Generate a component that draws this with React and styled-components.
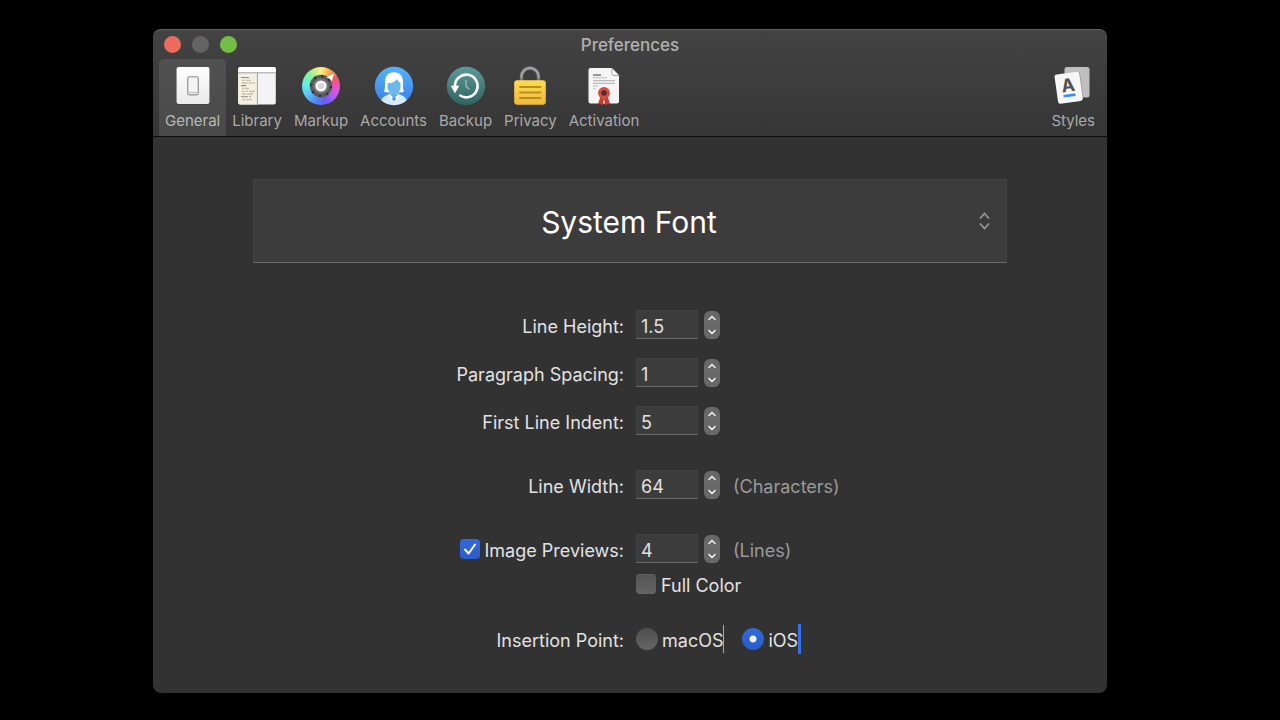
import React, { useState } from "react";
import styled, { createGlobalStyle } from "styled-components";

const GlobalStyle = createGlobalStyle`
  *, *::before, *::after { box-sizing: border-box; }
  body {
    margin: 0;
    background: #000;
    color: #e2e2e2;
    font-family: Inter, "Liberation Sans", sans-serif;
    font-size: 18px;
  }
  button, input, select { font: inherit; color: inherit; margin: 0; }
`;

const Desktop = styled.div`
  padding: 29px 173px 27px 153px;
`;

const Window = styled.main`
  border-radius: 8px;
  overflow: hidden;
  background: #323232;
`;

const Header = styled.header`
  background: linear-gradient(#434343, #363636);
  border-bottom: 1px solid #0c0c0c;
  border-radius: 8px 8px 0 0;
  box-shadow: inset 0 1px 0 #636363;
`;

const TitleBar = styled.div`
  display: grid;
  grid-template-columns: 1fr auto 1fr;
  align-items: center;
  height: 30px;
  padding: 0 11px;
`;

const Lights = styled.div`
  display: flex;
  gap: 11px;
`;

const Light = styled.button`
  width: 17px;
  height: 17px;
  padding: 0;
  border: 0;
  border-radius: 50%;
  background: ${(p) => p.$color};
`;

const Title = styled.h1`
  margin: 0;
  padding-top: 2px;
  font-size: 17px;
  line-height: 20px;
  font-weight: 500;
  color: #b0b0b0;
`;

const Toolbar = styled.nav`
  display: flex;
  padding: 0 6px;
`;

const ToolButton = styled.button`
  display: flex;
  flex-direction: column;
  align-items: center;
  gap: 5px;
  padding: 7px 6px 5px;
  border: 0;
  border-radius: 5px 5px 0 0;
  background: ${(p) => (p.$active ? "linear-gradient(#515151, #494949)" : "none")};
  color: ${(p) => (p.$active ? "#b9b9b9" : "#a9a9a9")};
  font-size: 15px;
  line-height: 20px;
  margin-left: ${(p) => (p.$end ? "auto" : "0")};

  svg { display: block; }
`;

const ColorWheel = styled.span`
  display: block;
  width: 40px;
  height: 40px;
  border-radius: 50%;
  border: 1px solid transparent;
  background: conic-gradient(#fdf07c, #fba04e 35deg, #f4585c 62deg, #ee4fd8 95deg, #b05cf5 130deg, #6a5cf0 165deg, #4f86f6 200deg, #5cc8f8 240deg, #62f0e8 275deg, #7ff0a0 310deg, #fdf07c) content-box;

  svg { margin: -1px; }
`;

const Body = styled.section`
  padding: 42px 100px 39px;
`;

const FontPicker = styled.label`
  position: relative;
  display: block;

  svg {
    position: absolute;
    right: 16px;
    top: 32px;
    pointer-events: none;
  }
`;

const FontSelect = styled.select`
  appearance: none;
  display: block;
  width: 100%;
  height: 84px;
  padding: 1px 2px 0 0;
  border: 1px solid #424242;
  border-bottom-color: #6a6a6a;
  border-radius: 0;
  background: #3c3c3c;
  color: #fff;
  font-size: 30px;
  text-align: center;
  text-align-last: center;
`;

const Form = styled.form`
  padding-top: 47px;
`;

const Row = styled.div`
  display: grid;
  grid-template-columns: 1fr 1fr;
  grid-template-rows: 100%;
  column-gap: 12px;
  align-items: center;
  height: ${(p) => p.$height || 29}px;
  margin-top: ${(p) => p.$gap || 0}px;
`;

const Caption = styled.div`
  display: flex;
  justify-content: flex-end;
  align-items: center;
  gap: 5px;
`;

const Label = styled.label`
  padding-top: 4px;
  line-height: 22px;
  white-space: nowrap;
`;

const Field = styled.div`
  display: flex;
  align-items: center;
`;

const NumberBox = styled.input`
  width: 62px;
  height: 29px;
  padding: 3px 4px 0;
  border: 1px solid #424242;
  border-bottom-color: #6e6e6e;
  border-radius: 0;
  background: #3c3c3c;
  outline: none;
`;

const Stepper = styled.div`
  display: flex;
  flex-direction: column;
  width: 16px;
  height: 28px;
  margin: 0 13px 0 6px;
  border-radius: 6px;
  overflow: hidden;
  background: #686868;
`;

const StepButton = styled.button`
  flex: 1;
  display: flex;
  justify-content: center;
  align-items: center;
  padding: 0;
  border: 0;
  background: none;
`;

const Unit = styled.span`
  padding-top: 4px;
  line-height: 22px;
  color: #9a9a9a;
`;

const Tick = styled.input`
  appearance: none;
  flex: none;
  width: 20px;
  height: 20px;
  border-radius: 4px;
  background: linear-gradient(#545454, #656565);
  box-shadow: inset 0 1px 0 #5f5f5f;

  &:checked {
    background: linear-gradient(#3269da, #2a5ccb);
    box-shadow: none;
  }
`;

const TickWrap = styled.span`
  position: relative;
  display: flex;

  svg {
    position: absolute;
    inset: 0;
    pointer-events: none;
  }
`;

const Radio = styled.input`
  appearance: none;
  flex: none;
  width: 22px;
  height: 22px;
  border-radius: 50%;
  background: linear-gradient(#4f4f4f, #656565);

  &:checked {
    background: radial-gradient(circle, #eef3ff 3px, transparent 4px), linear-gradient(#3269da, #2a5ccb);
  }
`;

const Option = styled.div`
  display: flex;
  align-items: center;
  gap: 4px;
  margin-right: 18px;
`;

const CaretLabel = styled.label`
  display: flex;
  align-items: center;
  height: ${(p) => (p.$ios ? 30 : 28)}px;
  padding-top: 3px;
  border-right: ${(p) => (p.$ios ? "3px solid #2f72f2" : "1px solid #a8a8a8")};
`;

const Spread = styled.div`
  display: flex;
  align-items: center;
  gap: 5px;
`;

function GeneralIcon() {
  return (
    <svg width="40" height="40" viewBox="0 0 40 40" aria-hidden="true">
      <defs>
        <linearGradient id="plate" x2="0" y2="1">
          <stop stopColor="#ffffff" />
          <stop offset="1" stopColor="#e9e9e9" />
        </linearGradient>
      </defs>
      <rect x="3" y="1" width="34" height="37.5" rx="2.5" fill="#222" opacity=".5" />
      <rect x="3.5" y="1" width="33" height="37" rx="2" fill="url(#plate)" />
      <rect x="14.7" y="10.7" width="10.6" height="18.2" rx="1.8" fill="#e9e9e9" stroke="#929292" strokeWidth="1.1" />
      <path d="M15.6 26.3h8.8" stroke="#bcbcbc" strokeWidth="1" />
      <rect x="16" y="12" width="8" height="13.5" fill="#f4f4f4" />
    </svg>
  );
}

function LibraryIcon() {
  return (
    <svg width="40" height="40" viewBox="0 0 40 40" aria-hidden="true">
      <rect x="1.2" y="1" width="37.6" height="37.4" rx="2" fill="#f3f3f5" />
      <path d="M1.2 7h19.2v31.4H3.2a2 2 0 0 1-2-2z" fill="#f4f0df" />
      <path d="M3.2 1h33.6a2 2 0 0 1 2 2v3.6H1.2V3a2 2 0 0 1 2-2z" fill="#fff" />
      <path d="M1.2 6.8h37.6M20.4 7v31.4" stroke="#a3a19b" strokeWidth="1" />
      <g stroke="#8e8c7e" strokeWidth="1.1">
        <path d="M4 11.5h8M4 19.6h5.2M4 30.8h7M12.3 30.8h1.8" />
      </g>
      <g stroke="#c2bfae" strokeWidth="1.3">
        <path d="M5 14.4h3M9 14.4h4.5M5 17h5.5M11.5 17h3.5M16 17h2M5 22.5h2M8 22.5h4M5 25.3h3M9 25.3h2M12 25.3h6M5 28h4M10 28h6M5 33.7h3M9 33.7h6" />
      </g>
    </svg>
  );
}

function MarkupIcon() {
  return (
    <ColorWheel>
      <svg width="40" height="40" viewBox="0 0 40 40" aria-hidden="true">
        <circle cx="20" cy="20" r="11.2" fill="#5a5a5d" />
        <circle cx="20" cy="20" r="10" fill="none" stroke="#343438" strokeWidth="2.400" strokeDasharray="2.200 5.654" />
        <circle cx="20" cy="20" r="7.800" fill="#77777a" />
        <circle cx="20" cy="20" r="5.600" fill="#fff" />
        <circle cx="20" cy="20" r="3" fill="#d6d6d6" />
        <path d="M25.400 11.200l7.400-3.700-1.900 7.800q-1.900-2.900-5.500-4.100z" fill="#fff" />
      </svg>
    </ColorWheel>
  );
}

function AccountsIcon() {
  return (
    <svg width="40" height="40" viewBox="0 0 40 40" aria-hidden="true">
      <defs>
        <linearGradient id="sky" x2="0" y2="1">
          <stop stopColor="#54b3f7" />
          <stop offset="1" stopColor="#3a7cec" />
        </linearGradient>
        <clipPath id="disc"><circle cx="20" cy="20" r="19.2" /></clipPath>
      </defs>
      <circle cx="20" cy="20" r="19.2" fill="url(#sky)" />
      <g clipPath="url(#disc)">
        <path d="M6 40c.4-6 2.500-9.200 6.500-10.800L17 27h6l4.500 2.200C31.500 30.800 33.600 34 34 40z" fill="#d6eafb" />
        <path d="M16 27.500L20 34l4-6.500z" fill="#5ea9f0" />
        <path d="M10 25.800c1.300-2.700.8-6.800 1-10.600C11.300 9.400 15 6.300 20 6.300s8.700 3.100 9 8.900c.2 3.800-.3 7.900 1 10.600-2.500 1.100-4.800 1-7 .2h-6c-2.200.8-4.500.9-7-.2z" fill="#fff" />
        <path d="M13.500 17.300c4.500 0 7.800-1.500 9.700-4.300.8 1.900 1.700 3.300 3.300 4v4.400c0 3.600-3.600 6.500-6.500 7.200-2.900-.7-6.500-3.600-6.500-7.200z" fill="#6bb7ee" />
        <path d="M15 28.600l5 3.200 5-3.200-1.600 5.200L20 31.600l-3.400 2.200z" fill="#fff" />
        <path d="M18 31.400h4l-1 3h-2z" fill="#3d8ce4" />
      </g>
    </svg>
  );
}

function BackupIcon() {
  return (
    <svg width="40" height="40" viewBox="0 0 40 40" aria-hidden="true">
      <defs>
        <linearGradient id="teal" x2="0" y2="1">
          <stop stopColor="#5d9b98" />
          <stop offset="1" stopColor="#2f625f" />
        </linearGradient>
      </defs>
      <circle cx="20" cy="20" r="19.2" fill="url(#teal)" />
      <path d="M9 20.500A11.300 11.300 0 1 1 14.200 29.500" fill="none" stroke="#fff" strokeWidth="2.600" strokeLinecap="round" />
      <path d="M5.200 20h7.600L9 26.800z" fill="#fff" stroke="#fff" strokeWidth=".6" strokeLinejoin="round" />
      <path d="M20 13.800v6.400l3.400 3.200" fill="none" stroke="#a3cbc6" strokeWidth="1.200" />
    </svg>
  );
}

function PrivacyIcon() {
  return (
    <svg width="40" height="40" viewBox="0 0 40 40" aria-hidden="true">
      <defs>
        <linearGradient id="brass" x2="0" y2="1">
          <stop stopColor="#fbdc4e" />
          <stop offset="1" stopColor="#f1b93a" />
        </linearGradient>
      </defs>
      <path d="M11.500 16v-5.500a8.500 8.500 0 0 1 17 0V16" fill="none" stroke="#77787b" strokeWidth="3.400" />
      <path d="M11.500 12v-1.500a8.500 8.500 0 0 1 17 0V12" fill="none" stroke="#a5a6aa" strokeWidth="1.800" />
      <rect x="4.200" y="14.200" width="31.600" height="24.600" rx="3" fill="url(#brass)" />
      <path d="M10 21h20.500M10 26.500h20.500M10 32h20.500" stroke="#b98d25" strokeWidth="2" strokeLinecap="round" />
    </svg>
  );
}

function ActivationIcon() {
  return (
    <svg width="40" height="40" viewBox="0 0 40 40" aria-hidden="true">
      <path d="M6.500 2H28l7 7.500v26a2 2 0 0 1-2 2H6.500a2 2 0 0 1-2-2V4a2 2 0 0 1 2-2z" fill="#f5f5f5" />
      <path d="M28 2v5.500a2 2 0 0 0 2 2h5z" fill="#fff" stroke="#8d8d8d" strokeWidth=".8" />
      <g fill="none">
        <path d="M9 9h8" stroke="#777" strokeWidth="1.300" />
        <path d="M9 11.800h14M9 14.600h22M9 17.400h22M9 20h5M9 22.800h2.500" stroke="#bcbcbc" strokeWidth="1.100" />
      </g>
      <path d="M17 29L13.800 38.500l2.800-.6 1.900 1.600 1.500-6.500 1.500 6.500 1.900-1.600 2.800.6L23 29z" fill="#c83a2f" />
      <circle cx="20" cy="27" r="6" fill="#dd4c3f" />
      <circle cx="20" cy="27" r="2.800" fill="#4a2f32" />
    </svg>
  );
}

function StylesIcon() {
  return (
    <svg width="40" height="40" viewBox="0 0 40 40" aria-hidden="true">
      <rect x="11.500" y="1" width="25" height="30.500" rx="2.500" fill="#bfbfbf" />
      <g transform="rotate(-8 15.500 22)">
        <rect x="3.200" y="7.200" width="25.600" height="30" rx="2.500" fill="#222" opacity=".35" />
        <rect x="3.200" y="7" width="25" height="29.500" rx="2.500" fill="#f6f6f6" />
        <text x="15.500" y="25.500" textAnchor="middle" fontFamily="Inter, sans-serif" fontSize="18" fontWeight="700" fill="#505050">A</text>
        <path d="M9.500 29.500h12" stroke="#3d8cf0" strokeWidth="2.600" />
      </g>
    </svg>
  );
}

function Chevron({ up }) {
  return (
    <svg width="8" height="6" viewBox="0 0 8 6" aria-hidden="true">
      <path d={up ? "M1 4.500l3-3 3 3" : "M1 1.500l3 3 3-3"} fill="none" stroke="#ececec" strokeWidth="1.700" strokeLinecap="round" strokeLinejoin="round" />
    </svg>
  );
}

const tools = [
  { name: "General", Icon: GeneralIcon },
  { name: "Library", Icon: LibraryIcon },
  { name: "Markup", Icon: MarkupIcon },
  { name: "Accounts", Icon: AccountsIcon },
  { name: "Backup", Icon: BackupIcon },
  { name: "Privacy", Icon: PrivacyIcon },
  { name: "Activation", Icon: ActivationIcon },
  { name: "Styles", Icon: StylesIcon, end: true },
];

function NumberField({ id, initial, step = 1, unit }) {
  const [value, setValue] = useState(initial);
  const change = (by) => setValue((v) => String(Math.round((Number(v) + by) * 10) / 10));
  return (
    <Field>
      <NumberBox id={id} inputMode="decimal" value={value} onChange={(e) => setValue(e.target.value)} />
      <Stepper>
        <StepButton type="button" aria-label="Increase" onClick={() => change(step)}><Chevron up /></StepButton>
        <StepButton type="button" aria-label="Decrease" onClick={() => change(-step)}><Chevron /></StepButton>
      </Stepper>
      {unit && <Unit>{unit}</Unit>}
    </Field>
  );
}

function NumberRow({ id, label, gap, ...field }) {
  return (
    <Row $gap={gap}>
      <Caption><Label htmlFor={id}>{label}</Label></Caption>
      <NumberField id={id} {...field} />
    </Row>
  );
}

export default function App() {
  const [active, setActive] = useState("General");
  const [previews, setPreviews] = useState(true);
  const [point, setPoint] = useState("ios");

  return (
    <Desktop>
      <GlobalStyle />
      <Window>
        <Header>
          <TitleBar>
            <Lights>
              <Light $color="#ed6a5e" aria-label="Close" />
              <Light $color="#646464" aria-label="Minimize" />
              <Light $color="#72be47" aria-label="Zoom" />
            </Lights>
            <Title>Preferences</Title>
          </TitleBar>
          <Toolbar>
            {tools.map(({ name, Icon, end }) => (
              <ToolButton key={name} $active={name === active} $end={end} onClick={() => setActive(name)}>
                <Icon />
                {name}
              </ToolButton>
            ))}
          </Toolbar>
        </Header>
        <Body>
          <FontPicker>
            <FontSelect aria-label="Font">
              <option>System Font</option>
            </FontSelect>
            <svg width="13" height="20" viewBox="0 0 13 20" aria-hidden="true">
              <path d="M2 7.500l4.500-5 4.500 5M2 12.500l4.500 5 4.500-5" fill="none" stroke="#989898" strokeWidth="1.800" />
            </svg>
          </FontPicker>
          <Form>
            <NumberRow id="line-height" label="Line Height:" initial="1.5" step={0.1} />
            <NumberRow id="paragraph" label="Paragraph Spacing:" initial="1" gap={19} />
            <NumberRow id="indent" label="First Line Indent:" initial="5" gap={19} />
            <NumberRow id="line-width" label="Line Width:" initial="64" unit="(Characters)" gap={35} />
            <Row $gap={35}>
              <Caption>
                <TickWrap>
                  <Tick type="checkbox" id="previews" checked={previews} onChange={(e) => setPreviews(e.target.checked)} />
                  {previews && (
                    <svg width="20" height="20" viewBox="0 0 20 20" aria-hidden="true">
                      <path d="M5 10.500l3.600 4L15 5.500" fill="none" stroke="#fff" strokeWidth="2" strokeLinecap="round" strokeLinejoin="round" />
                    </svg>
                  )}
                </TickWrap>
                <Label htmlFor="previews">Image Previews:</Label>
              </Caption>
              <NumberField id="preview-lines" initial="4" unit="(Lines)" />
            </Row>
            <Row $gap={11} $height={20}>
              <span />
              <Spread>
                <Tick type="checkbox" id="full-color" />
                <Label htmlFor="full-color">Full Color</Label>
              </Spread>
            </Row>
            <Row $gap={30} $height={30}>
              <Caption><Label as="span">Insertion Point:</Label></Caption>
              <Field role="radiogroup" aria-label="Insertion Point">
                <Option>
                  <Radio type="radio" name="point" id="mac" checked={point === "mac"} onChange={() => setPoint("mac")} />
                  <CaretLabel htmlFor="mac">macOS</CaretLabel>
                </Option>
                <Option>
                  <Radio type="radio" name="point" id="ios" checked={point === "ios"} onChange={() => setPoint("ios")} />
                  <CaretLabel htmlFor="ios" $ios>iOS</CaretLabel>
                </Option>
              </Field>
            </Row>
          </Form>
        </Body>
      </Window>
    </Desktop>
  );
}
